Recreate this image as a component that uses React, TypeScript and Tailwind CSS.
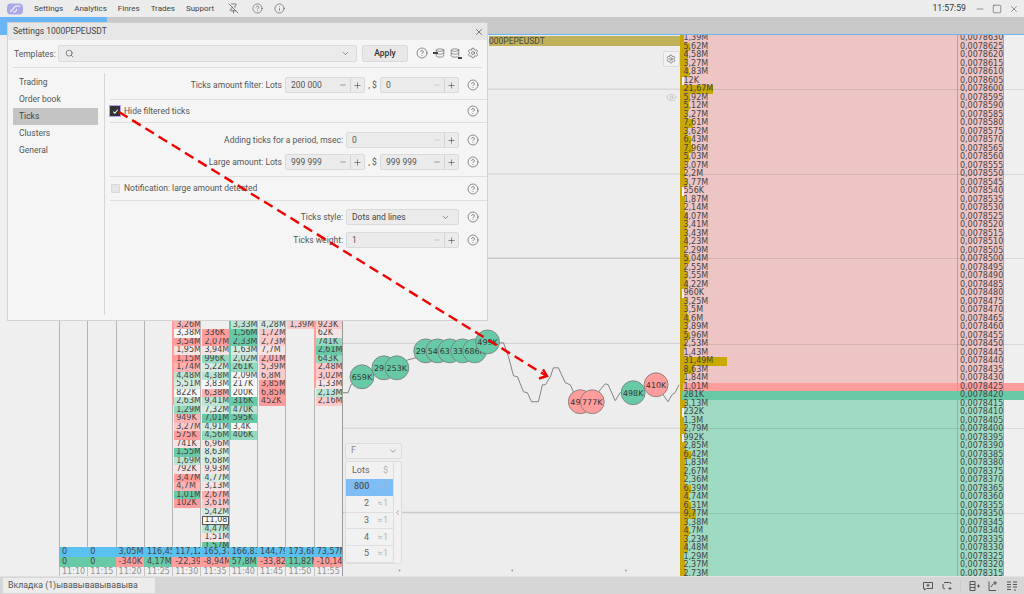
import React from 'react';
import { ChevronDown, ChevronLeft, CircleHelp, Database, Eye, Info, Minus, PinOff, Plus, Search, Settings, Square, X } from 'lucide-react';

type Cell = [string, string];

const SHADES: Record<string, string> = {
  w: 'bg-[#f7f7f7]',
  r0: 'bg-[#f6e3e3]',
  r1: 'bg-[#fbc9c9]',
  r2: 'bg-[#fdb3b3]',
  r3: 'bg-[#ff9c9c]',
  g0: 'bg-[#d5ebe1]',
  g1: 'bg-[#bbe4d3]',
  g2: 'bg-[#94d9bd]',
  g3: 'bg-[#68c9a7]',
  n: '',
  box: 'bg-[#f7f7f7] outline outline-1 outline-[#555] -outline-offset-1',
};

const parse = (s: string): Cell[] => s.split(' ').map(c => {
  const [text, shade] = c.split(':');
  return [text === '_' ? '' : text, shade] as Cell;
});

const COLUMNS = [
  { time: '11:10', blue: '0', delta: '0', up: true, cells: '' },
  { time: '11:15', blue: '0', delta: '0', up: true, cells: '' },
  { time: '11:20', blue: '3,05M', delta: '-340K', up: false, cells: '' },
  { time: '11:25', blue: '116,45', delta: '4,17M', up: true, cells: '' },
  { time: '11:30', blue: '117,12', delta: '-22,39', up: false, bar: 'bg-[#ff9c9c]', barH: 370,
    cells: '3,26M:r2 3,38M:w 3,54M:r3 1,95M:r0 1,15M:r3 1,74M:r2 4,48M:g1 5,51M:g0 822K:w 2,63M:g1 1,29M:g2 949K:r2 3,27M:r1 575K:r3 741K:r0 1,55M:g3 1,69M:g1 792K:r0 3,47M:r3 4,7M:r2 1,01M:g3 102K:r3' },
  { time: '11:35', blue: '165,37', delta: '-8,94M', up: false,
    cells: '_:n 336K:r3 2,07M:r3 3,94M:r0 996K:g2 5,22M:g0 4,38M:g1 3,83M:w 6,38M:r2 9,41M:g1 7,32M:g0 7,01M:g3 4,91M:g0 4,56M:g2 6,96M:r0 8,63M:g0 6,68M:g0 9,93M:r0 4,77M:g0 3,13M:r0 2,67M:r2 3,61M:r1 5,42M:g0 11,08:box 4,47M:g1 1,51M:r0 1,57M:g3' },
  { time: '11:40', blue: '166,83', delta: '57,8M', up: true, bar: 'bg-[#68c9a7]', barH: 405,
    cells: '3,33M:g1 1,56M:g3 2,33M:g3 1,63M:g0 2,02M:g1 261K:g2 2,09M:w 217K:w 200K:w 316K:g3 470K:g1 595K:g3 3,4K:w 406K:g2' },
  { time: '11:45', blue: '144,79', delta: '-33,82', up: false,
    cells: '4,28M:g0 1,72M:r1 2,73M:r1 7,7M:r0 2,01M:r2 5,39M:r1 6,8M:r1 3,85M:r3 6,85M:r3 452K:r3' },
  { time: '11:50', blue: '173,68', delta: '11,82M', up: true, cells: '1,39M:r1' },
  { time: '11:55', blue: '73,57M', delta: '-10,14', up: false, bar: 'bg-[#ff9c9c]', barH: 353,
    cells: '923K:r1 62K:r0 741K:g2 2,61M:g3 643K:g2 2,48M:r1 3,02M:r1 1,33M:r0 2,13M:g1 2,16M:r1' },
];

const VOLUMES = '1,39M 5,62M 4,58M 3,27M 4,83M 12K 21,67M 5,92M 5,12M 3,27M 7,61M 3,62M 6,43M 7,96M 5,03M 3,07M 2,2M 3,77M 556K 1,87M 2,14M 4,07M 3,41M 3,43M 4,23M 2,29M 5,04M 2,55M 3,55M 4,22M 960K 3,25M 3,5M 4,6M 3,89M 5,96M 2,53M 1,43M 31,49M 8,63M 1,84M 1,01M 281K 3,13M 232K 1,3M 2,79M 992K 2,85M 6,42M 1,83M 2,67M 2,36M 6,39M 4,74M 6,31M 9,77M 3,38M 4,7M 3,23M 4,48M 1,29M 2,37M 2,73M'.split(' ');

const GRID_LINES = [54, 139, 223, 309, 393, 478];

const barWidth = (v: string) => {
  if (v.endsWith('K')) return 0;
  return parseFloat(v.replace(',', '.')) * 1.42;
};

const TimeColumn = ({ col }: { col: (typeof COLUMNS)[number] }) => (
  <div className="w-[28.3px] flex flex-col font-['DejaVu_Sans',sans-serif] text-[8px] leading-[8.5px] text-[#444] relative">
    <div className="flex-1 border-l border-[#b5b5b5] pt-[285.75px] overflow-hidden">
      {col.cells && parse(col.cells).map(([t, s], i) => (
        <div key={i} className={`h-[8.5px] ml-[1px] pl-[2px] overflow-hidden whitespace-nowrap ${SHADES[s]}`}>{t}</div>
      ))}
    </div>
    {col.bar && <div className={`absolute left-0 top-0 w-[2px] ${col.bar}`} style={{ height: col.barH }} />}
    <div className="h-[10px] bg-[#5ac0f0] pl-[3px] leading-[10px] overflow-hidden whitespace-nowrap">{col.blue}</div>
    <div className={`h-[9.5px] pl-[3px] leading-[9.5px] overflow-hidden whitespace-nowrap ${col.up ? 'bg-[#68c9a7]' : 'bg-[#ff9c9c]'}`}>{col.delta}</div>
    <div className="h-[9.5px] pl-[2px] leading-[9.5px] text-[#8f8f8f] border-l border-[#c4c4c4] overflow-hidden whitespace-nowrap">{col.time}</div>
  </div>
);

const LadderRow = ({ vol, index }: { vol: string; index: number }) => {
  const price = (78630 - index * 5).toString();
  const bg = index === 41 ? 'bg-[#ff9c9c]' : index === 42 ? 'bg-[#68c9a7]' : index < 41 ? 'bg-[#edc5c5]' : 'bg-[#9fdbc3]';
  const strip = index === 41 || index === 42 ? bg : 'bg-[#efefef]';
  return (
    <div className="h-[8.5px] flex leading-[8.5px]">
      <div className={`w-[275px] relative pl-[1.5px] ${bg}`}>
        {index !== 41 && index !== 42 && barWidth(vol) === 0 && <div className="absolute left-0 top-0 h-full w-[2px] bg-[#f4f0f0]" />}
        <div className="absolute left-0 top-0 h-full bg-[#c9a900]" style={{ width: barWidth(vol) }} />
        <span className="relative">{vol}</span>
      </div>
      <div className={`w-[47px] border-x border-[#a9a9a9] pl-[2px] ${bg}`}>0,00{price}</div>
      <div className={`flex-1 ${strip}`} />
    </div>
  );
};

const Circle = ({ x, y, label, red, left }: { x: number; y: number; label: string; red?: boolean; left?: boolean }) => (
  <g>
    <circle cx={x} cy={y} r={12} fill={red ? '#ff9c9c' : '#68c9a7'} stroke="#777" strokeWidth={0.8} />
    <text x={left ? x - 10 : x} y={y + 3} textAnchor={left ? 'start' : 'middle'} fontSize={8} fill="#333" fontFamily="DejaVu Sans, sans-serif">{label}</text>
  </g>
);

const PriceChart = () => (
  <svg viewBox="342 35 338 541" className="w-full h-full block">
    {[88.5, 173.5, 258, 343.5, 428.5, 513].map(y => (
      <line key={y} x1={342} x2={680} y1={y} y2={y} stroke={y === 258 || y === 513 ? '#c9c9c9' : '#d0d0d0'} strokeWidth={y === 258 || y === 513 ? 1.5 : 1} />
    ))}
    <polyline
      fill="none"
      stroke="#777"
      strokeWidth={0.9}
      points="342,393 347,393 350,385 361,377 383,368 396,368 407,360 415,358 425,351 474,351 487,342 500,343 503,343 508,357 513,376 517,377 523,392 527,393 531,402 538,402 542,385 545,385 550,377 553,368 558,368 565,383 570,385 573,392 580,402 592,402 600,390 605,384 608,385 615,401 620,393 633,393 656,385 663,395 668,402 672,395 675,393 679,385"
    />
    <Circle x={361} y={377} label="659K" />
    <Circle x={383} y={368} label="29" left />
    <Circle x={396} y={368} label="253K" />
    <Circle x={425} y={351} label="29" left />
    <Circle x={437} y={351} label="54" left />
    <Circle x={449} y={351} label="63" left />
    <Circle x={462} y={351} label="33" left />
    <Circle x={474} y={351} label="686K" />
    <Circle x={487} y={342} label="499K" />
    <Circle x={580} y={402} label="49" red left />
    <Circle x={592} y={402} label="777K" red />
    <Circle x={633} y={393} label="498K" />
    <Circle x={656} y={385} label="410K" red />
    <rect x={398} y={570.5} width={1.5} height={1.5} fill="#888" />
    <rect x={511} y={570.5} width={1.5} height={1.5} fill="#888" />
    <rect x={625} y={570.5} width={1.5} height={1.5} fill="#888" />
  </svg>
);

const LotsPanel = () => (
  <div className="absolute left-[2px] top-[408px] w-[57px] font-['Roboto',sans-serif] text-[9px] text-[#666]">
    <div className="h-[16px] border border-[#dcdcdc] rounded-[2px] flex items-center justify-between pl-[5px] pr-[3px] bg-[#efefef]">
      <span className="text-[#888]">F</span>
      <ChevronDown size={10} strokeWidth={1.5} />
    </div>
    <div className="mt-[2px] flex h-[103px] border border-[#dcdcdc] rounded-[2px] bg-[#f1f1f1]">
      <div className="w-[49px] flex flex-col">
        <div className="h-[17px] flex items-center justify-between pl-[6px] pr-[5px]"><span>Lots</span><span className="text-[#b5b5b5]">$</span></div>
        <div className="h-[17px] flex items-center justify-between pl-[8px] pr-[5px] bg-[#7dbdf5]"><span className="text-[#555] font-medium">800</span><span className="text-[#a2b9cf]">≈7</span></div>
        {['2', '3', '4', '5'].map(n => (
          <div key={n} className="h-[17px] flex items-center justify-between pl-[18px] pr-[5px] border-b border-[#dedede]"><span>{n}</span><span className="text-[#b5b5b5]">≈1</span></div>
        ))}
      </div>
      <div className="flex-1 border-l border-[#dcdcdc] flex items-center justify-center"><ChevronLeft size={7} strokeWidth={2} /></div>
    </div>
  </div>
);

const Help = () => <CircleHelp size={12} strokeWidth={1.2} className="text-[#444] shrink-0" />;

const NumberInput = ({ value, w, faint }: { value: string; w: string; faint?: boolean }) => (
  <div className={`${w} h-[16px] flex items-center bg-[#ebebeb] border border-[#dadada] rounded-[2px] text-[#555]`}>
    <span className="flex-1 pl-[5px]">{value}</span>
    <div className="w-[15px] flex justify-center"><Minus size={8} strokeWidth={1.4} className={faint ? 'text-[#aaa]' : 'text-[#444]'} /></div>
    <div className="w-[14px] h-full flex items-center justify-center border-l border-[#d4d4d4]"><Plus size={9} strokeWidth={1.4} className="text-[#333]" /></div>
  </div>
);

const Divider = () => <div className="h-[1px] bg-[#dedede]" />;

const SettingsDialog = () => (
  <div className="absolute left-[7px] top-[22px] w-[481px] h-[299px] bg-[#f5f5f5] border border-[#d2d2d2] font-['Roboto',sans-serif] text-[8.5px] text-[#555]">
    <div className="h-[17px] bg-[#e6e6e6] flex items-center justify-between pl-[5px] pr-[3px] text-[#444]">
      <span>Settings 1000PEPEUSDT</span>
      <X size={10} strokeWidth={1.5} className="text-[#333]" />
    </div>
    <div className="h-[27px] pt-[5px] px-[6px] flex items-start">
      <span className="mt-[3px] w-[44px]">Templates:</span>
      <div className="w-[299px] h-[17px] flex items-center justify-between border border-[#dadada] bg-[#ebebeb] rounded-[2px] px-[6px]">
        <Search size={9} strokeWidth={1.6} className="text-[#444]" />
        <ChevronDown size={9} strokeWidth={1.5} className="text-[#444]" />
      </div>
      <div className="ml-[5px] w-[46px] h-[17px] flex items-center justify-center bg-[#e8e8e8] border border-[#dadada] rounded-[2px] text-[#333] font-medium">Apply</div>
      <div className="ml-[8px] flex items-center gap-[5px] mt-[2px] text-[#444]">
        <Help />
        <div className="relative w-[12px] h-[12px]">
          <Database size={10} strokeWidth={1.3} className="absolute right-0 top-[1px]" />
          <div className="absolute left-0 top-[5px] w-[5px] h-[1.5px] bg-[#444]" />
        </div>
        <div className="relative w-[12px] h-[12px]">
          <Database size={10} strokeWidth={1.3} className="absolute left-0 top-[1px]" />
          <div className="absolute right-0 bottom-0 w-[4px] h-[2px] bg-[#444]" />
        </div>
        <Settings size={12} strokeWidth={1.2} />
      </div>
    </div>
    <div className="mx-[5px] h-[1px] bg-[#dedede]" />
    <div className="flex pt-[5px]">
      <div className="w-[92px] ml-[5px] pt-[1px] h-[242px] border-r border-[#d6d6d6] pr-[6px] shrink-0">
        {['Trading', 'Order book', 'Ticks', 'Clusters', 'General'].map(item => (
          <div key={item} className={`h-[17px] flex items-center pl-[6px] ${item === 'Ticks' ? 'bg-[#c4c4c4] text-[#444]' : ''}`}>{item}</div>
        ))}
      </div>
      <div className="flex-1 pl-[5px]">
        <div className="h-[26px] pr-[8px] pb-[2px] flex items-center justify-end">
          <span className="mr-[3px]">Ticks amount filter: Lots</span>
          <NumberInput value="200 000" w="w-[80px]" />
          <span className="w-[15px] text-center">, $</span>
          <NumberInput value="0" w="w-[79px]" faint />
          <span className="w-[8px]" />
          <Help />
        </div>
        <Divider />
        <div className="h-[22px] pr-[8px] flex items-center">
          <div className="w-[10px] h-[10px] bg-[#333] outline outline-1 outline-[#b9a0f5] flex items-center justify-center mr-[4px]">
            <svg width="7" height="7" viewBox="0 0 8 8"><path d="M1.5 4.2 3.2 6 6.5 2" fill="none" stroke="#fff" strokeWidth="1.2" /></svg>
          </div>
          <span className="flex-1">Hide filtered ticks</span>
          <Help />
        </div>
        <Divider />
        <div className="pt-[9px] pb-[6px] pr-[8px] flex flex-col gap-[6px]">
          <div className="flex items-center justify-end">
            <span className="mr-[3px]">Adding ticks for a period, msec:</span>
            <NumberInput value="0" w="w-[113px]" faint />
            <span className="w-[8px]" />
            <Help />
          </div>
          <div className="flex items-center justify-end">
            <span className="mr-[3px]">Large amount: Lots</span>
            <NumberInput value="999 999" w="w-[80px]" />
            <span className="w-[15px] text-center">, $</span>
            <NumberInput value="999 999" w="w-[79px]" />
            <span className="w-[8px]" />
            <Help />
          </div>
        </div>
        <Divider />
        <div className="h-[23px] pr-[8px] flex items-center">
          <div className="w-[9px] h-[9px] ml-[1px] mr-[4px] bg-[#e6e6e6] border border-[#d8d8d8] rounded-[1px]" />
          <span className="flex-1">Notification: large amount detected</span>
          <Help />
        </div>
        <Divider />
        <div className="pt-[8px] pr-[8px] flex flex-col gap-[7px]">
          <div className="flex items-center justify-end">
            <span className="mr-[3px]">Ticks style:</span>
            <div className="w-[113px] h-[16px] flex items-center justify-between bg-[#ebebeb] border border-[#dadada] rounded-[2px] pl-[5px] pr-[8px] text-[#444]">
              <span>Dots and lines</span>
              <ChevronDown size={9} strokeWidth={1.5} />
            </div>
            <span className="w-[8px]" />
            <Help />
          </div>
          <div className="flex items-center justify-end">
            <span className="mr-[3px]">Ticks weight:</span>
            <NumberInput value="1" w="w-[113px]" faint />
            <span className="w-[8px]" />
            <Help />
          </div>
        </div>
      </div>
    </div>
  </div>
);

const SmallGlyph = ({ d }: { d: string }) => (
  <svg width="12" height="12" viewBox="0 0 12 12" fill="none" stroke="#555" strokeWidth="1"><path d={d} /></svg>
);

const App: React.FC = () => {
  return (
    <div className="w-screen h-screen overflow-hidden flex flex-col relative bg-[#efefef] font-['Roboto',sans-serif]">
      {/* Top menu */}
      <div className="h-[17px] bg-[#ececec] flex items-center text-[8px] text-[#444] shrink-0">
        <svg width="16" height="12" viewBox="0 0 16 12" className="ml-[7px]">
          <rect x="0" y="0.5" width="16" height="11" rx="4" fill="#aaa6ea" />
          <path d="M13.5 3.2H8.2L6 6 3.2 8.8" fill="none" stroke="#ececec" strokeWidth="1.3" />
          <path d="M6 8.8h2.5L10 6" fill="none" stroke="#ececec" strokeWidth="1.2" />
        </svg>
        <div className="ml-[11px] flex gap-[11px]">
          <span>Settings</span><span>Analytics</span><span>Finres</span><span>Trades</span><span>Support</span>
        </div>
        <PinOff size={11} strokeWidth={1.4} className="ml-[14px]" />
        <CircleHelp size={11} strokeWidth={1.2} className="ml-[13px]" />
        <Info size={11} strokeWidth={1.2} className="ml-[11px]" />
        <span className="ml-auto text-[#333] text-[8.7px]">11:57:59</span>
        <Minus size={10} strokeWidth={1.3} className="ml-[9px]" />
        <Square size={10} strokeWidth={1.3} className="ml-[7px]" />
        <X size={10} strokeWidth={1.3} className="ml-[7px] mr-[5px]" />
      </div>

      {/* Tab strip */}
      <div className="h-[18px] bg-[#c8c8c8] border-b border-[#6ab5f5] shrink-0">
        <div className="w-[107px] h-full bg-[#6ab5f5]" />
      </div>

      {/* Workspace */}
      <div className="flex-1 flex min-h-0 relative">
        <div className="w-[59px] bg-[#efefef] shrink-0" />
        {COLUMNS.map(col => <TimeColumn key={col.time} col={col} />)}
        <div className="w-[338px] border-l border-[#9a9a9a] bg-[#ededed] relative shrink-0">
          <PriceChart />
          <LotsPanel />
          <div className="absolute left-[146px] top-[1px] right-0 h-[10px] bg-[#bfb25b] text-[8.5px] leading-[10px] text-[#444] whitespace-nowrap overflow-hidden">000PEPEUSDT</div>
          <div className="absolute left-[320px] top-[16px] w-[17px] h-[16px] bg-[#f2f2f2] border border-[#dadada] rounded-[2px] flex items-center justify-center">
            <Settings size={10} strokeWidth={1.3} className="text-[#444]" />
          </div>
          <Eye size={11} strokeWidth={1.1} className="absolute left-[323px] top-[57px] text-[#aaa]" />
        </div>
        <div className="flex-1 border-l-[2px] border-[#c9a900] overflow-hidden relative font-['DejaVu_Sans',sans-serif] text-[8px] text-[#444]">
          <div className="-mt-[1px]">
            {VOLUMES.map((v, i) => <LadderRow key={i} vol={v} index={i} />)}
          </div>
          {GRID_LINES.map(y => (
            <div key={y} className="absolute left-0 right-0 h-[1px] bg-[#00000018]" style={{ top: y }} />
          ))}
        </div>
      </div>

      {/* Bottom bar */}
      <div className="h-[18px] bg-[#d6d6d6] flex items-center shrink-0 border-t border-[#e2e2e2]">
        <div className="ml-[3px] w-[152px] h-[15px] bg-[#ececec] flex items-center pl-[5px] text-[8.8px] text-[#555] whitespace-nowrap">Вкладка (1)ывавывавывавыва</div>
        <div className="ml-auto flex items-center gap-[7px] mr-[6px]">
          <SmallGlyph d="M1.5 2.5h9v6h-6l-2 1.5v-1.5h-1zM6 3.8v3M4.5 5.3h3" />
          <SmallGlyph d="M3 2.5h5.5a1.5 1.5 0 0 1 1.5 1.5M2 8V4M2 8l2 1M9 7v3M7.5 8.5h3" />
          <span className="w-[1px] h-[12px] bg-[#cacaca]" />
          <SmallGlyph d="M2 1.5h5v9H2zM2 4.5h5M2 7.5h5M9 6h3M10.5 4.5v3" />
          <SmallGlyph d="M2 1.5v9h7M4 7l2-3M8 1v4M6 3h4" />
          <SmallGlyph d="M1 2h4M1 4.5h4M1 7h4M1 9.5h4M7 2h4M7 4.5h4M7 7h4M9 9v2" />
        </div>
      </div>

      {/* Floating settings window */}
      <SettingsDialog />

      {/* Annotation arrow */}
      <svg className="absolute left-0 top-0 pointer-events-none" width="1024" height="594">
        <line x1="119" y1="112" x2="545" y2="375" stroke="#f00000" strokeWidth="2.4" strokeDasharray="10 5.5" />
        <path d="M539 378.5 547 376 543 369.5" fill="none" stroke="#f00000" strokeWidth="2.4" />
      </svg>
    </div>
  );
};

export default App;
